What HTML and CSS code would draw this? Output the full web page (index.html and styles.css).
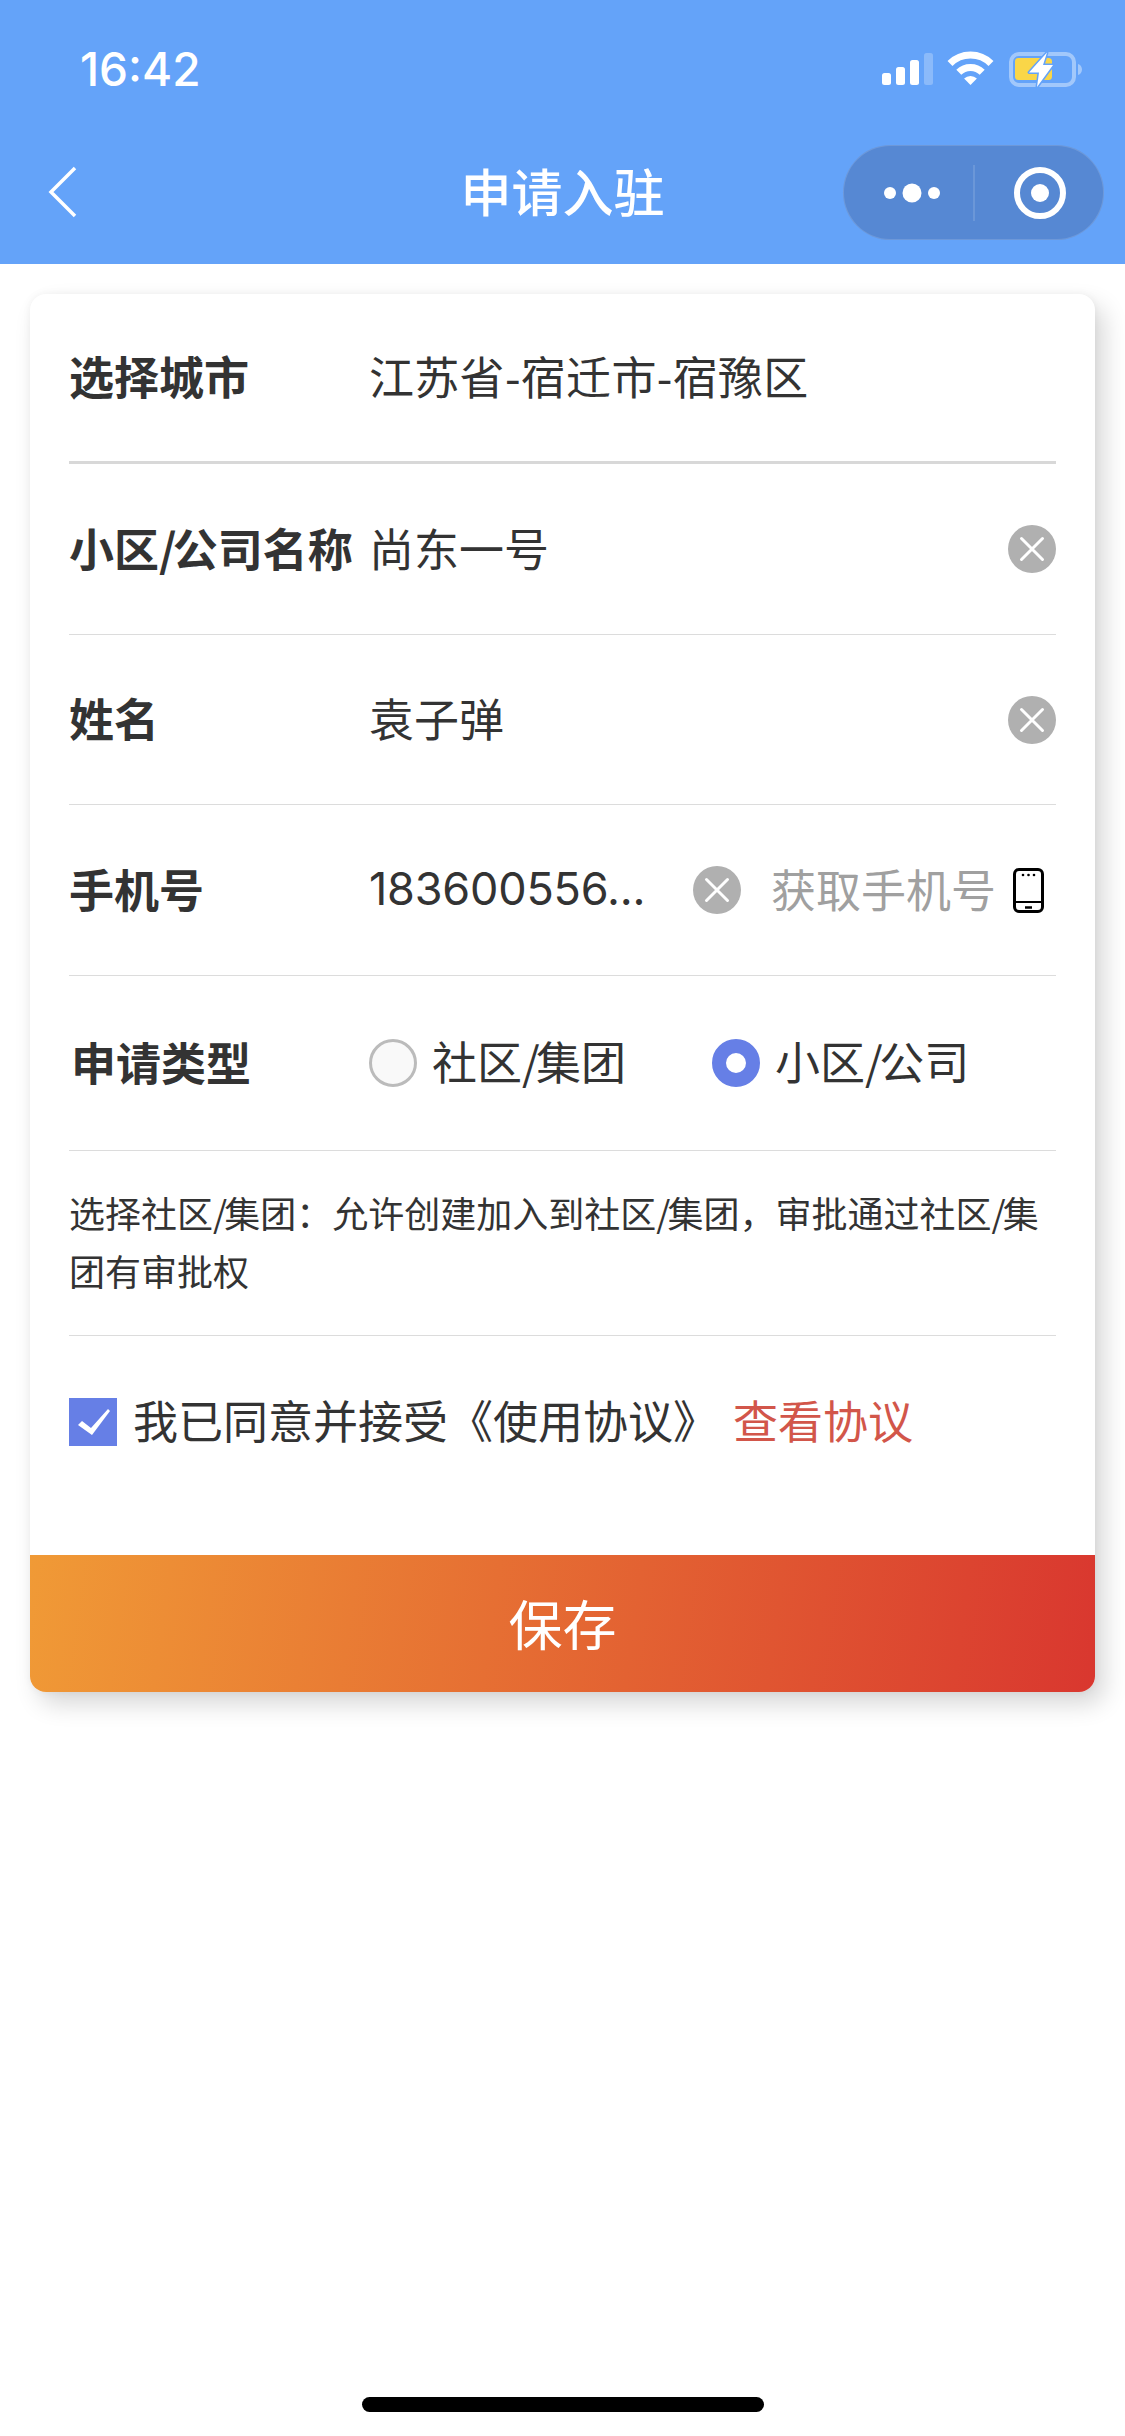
FILE: index.html
```html
<!DOCTYPE html>
<html lang="zh-CN">
<head>
<meta charset="utf-8">
<title>申请入驻</title>
<link rel="stylesheet" href="styles.css">
</head>
<body>
<div class="page">
  <header class="topbar">
    <div class="statusbar">
      <span class="time">16:42</span>
      <svg class="status-icons" viewBox="0 0 205 40" width="205" height="40">
        <g fill="#fff">
          <rect x="2" y="23" width="9" height="12" rx="2.5"/>
          <rect x="16" y="17" width="9" height="18" rx="2.5"/>
          <rect x="30" y="10" width="9" height="25" rx="2.5"/>
          <rect x="44" y="3" width="9" height="32" rx="2.5" opacity=".25"/>
        </g>
        <g fill="none" stroke="#fff" stroke-width="7">
          <path d="M70 13.500a29 29 0 0 1 41 0"/>
          <path d="M78.800 22.300a16.500 16.500 0 0 1 23.400 0"/>
        </g>
        <path d="M84.100 28.600a9 9 0 0 1 12.800 0L90.500 35z" fill="#fff"/>
        <rect x="131" y="4" width="63" height="31" rx="8" fill="none" stroke="#fff" stroke-opacity=".4" stroke-width="4"/>
        <path d="M198 14c2.500.8 4 3 4 5.500s-1.500 4.700-4 5.500z" fill="#fff" fill-opacity=".4"/>
        <rect x="135" y="8" width="37" height="22" rx="3.500" fill="#fad648"/>
        <path d="M167 2.500l-18 20h10l-2 14.500 16-22h-10z" fill="#fff" stroke="#64a3f9" stroke-width="3" stroke-linejoin="round" paint-order="stroke"/>
      </svg>
    </div>
    <nav class="navbar">
      <svg class="back" viewBox="0 0 30 52" width="30" height="52">
        <path d="M27 2L3 26l24 24" fill="none" stroke="#fff" stroke-width="3.500"/>
      </svg>
      <h1 class="title">申请入驻</h1>
      <div class="capsule">
        <svg class="capsule-icon" viewBox="0 0 261 95" width="261" height="95">
          <circle cx="47" cy="48" r="6" fill="#fff"/>
          <circle cx="69" cy="48" r="9.500" fill="#fff"/>
          <circle cx="91" cy="48" r="6" fill="#fff"/>
          <path d="M131 20v56" stroke="#fff" stroke-opacity=".25" stroke-width="1"/>
          <circle cx="197" cy="48" r="23" fill="none" stroke="#fff" stroke-width="6"/>
          <circle cx="197" cy="48" r="9" fill="#fff"/>
        </svg>
      </div>
    </nav>
  </header>

  <main class="card">
    <div class="row row--first">
      <div class="label">选择城市</div>
      <div class="value value--city">江苏省-宿迁市-宿豫区</div>
    </div>
    <div class="row row--c">
      <div class="label">小区<span class="sl">/</span>公司名称</div>
      <div class="value">尚东一号</div>
      <svg class="clear" viewBox="0 0 48 48" width="48" height="48"><circle cx="24" cy="24" r="24" fill="#b0b0b0"/><path d="M13.500 13.500l21 21m0-21l-21 21" stroke="#fff" stroke-width="3" stroke-linecap="round"/></svg>
    </div>
    <div class="row row--b">
      <div class="label">姓名</div>
      <div class="value">袁子弹</div>
      <svg class="clear" viewBox="0 0 48 48" width="48" height="48"><circle cx="24" cy="24" r="24" fill="#b0b0b0"/><path d="M13.500 13.500l21 21m0-21l-21 21" stroke="#fff" stroke-width="3" stroke-linecap="round"/></svg>
    </div>
    <div class="row row--c">
      <div class="label">手机号</div>
      <div class="value value--num">183600556...</div>
      <svg class="clear" viewBox="0 0 48 48" width="48" height="48"><circle cx="24" cy="24" r="24" fill="#b0b0b0"/><path d="M13.500 13.500l21 21m0-21l-21 21" stroke="#fff" stroke-width="3" stroke-linecap="round"/></svg>
      <span class="fetch">获取手机号</span>
      <svg class="phone" viewBox="0 0 31 45" width="31" height="45">
        <rect x="1.500" y="1.500" width="28" height="42" rx="4.500" fill="none" stroke="#000" stroke-width="3"/>
        <path d="M2 34h27" stroke="#000" stroke-width="2"/>
        <path d="M12 39.500h7" stroke="#000" stroke-width="2.500"/>
        <circle cx="10" cy="7" r="1.300"/><circle cx="15.500" cy="7" r="1.300"/><circle cx="21" cy="7" r="1.300"/>
      </svg>
    </div>
    <div class="row row--type">
      <div class="label label--type">申请类型</div>
      <div class="radios">
        <label class="radio"><span class="dot"></span><span class="radio-text">社区<span class="sl">/</span>集团</span></label>
        <label class="radio"><span class="dot dot--on"></span><span class="radio-text">小区<span class="sl">/</span>公司</span></label>
      </div>
    </div>
    <div class="hint">选择社区<span class="sl">/</span>集团：允许创建加入到社区<span class="sl">/</span>集团，审批通过社区<span class="sl">/</span>集<br>团有审批权</div>
    <div class="agree">
      <svg class="check" viewBox="0 0 48 48" width="48" height="48">
        <rect width="48" height="48" fill="#667fe6"/>
        <path d="M9 27l4-4 9 7 17-19 2 2-18 24z" fill="#fff"/>
      </svg>
      <span class="agree-text">我已同意并接受《使用协议》</span>
      <span class="agree-link">查看协议</span>
    </div>
    <button class="save" type="button">保存</button>
  </main>

  <div class="home-indicator"></div>
</div>
</body>
</html>
```

FILE: styles.css
```css
* { box-sizing: border-box; }
html, body { margin: 0; padding: 0; background: #fff; }
body { font-family: "Noto Sans CJK SC", "Liberation Sans", sans-serif; color: #333; }
.page { position: relative; width: 1125px; height: 2436px; overflow: hidden; }

.topbar { height: 264px; background: #64a3f9; color: #fff; }
.statusbar { height: 132px; padding: 50px 40px 0 80px; display: flex; justify-content: space-between; align-items: flex-start; }
.time { font-family: Inter, "Liberation Sans", sans-serif; font-size: 46px; font-weight: 500; line-height: 38px; }
.status-icons { display: block; }

.navbar { height: 120px; padding: 0 21px 0 48px; display: grid; grid-template-columns: 1fr auto 1fr; align-items: center; }
.back { display: block; }
.title { margin: 0 0 5px -27px; font-size: 51px; font-weight: 500; line-height: 60px; color: #fff; }
.capsule { justify-self: end; width: 261px; height: 95px; border-radius: 48px; background: #5688d3; box-shadow: inset 0 0 0 1px rgba(255,255,255,.14); }
.capsule-icon { display: block; }

.card { margin: 30px 30px 0; height: 1398px; background: #fff; border-radius: 16px; box-shadow: 9px 12px 24px rgba(0,0,0,.16), 0 0 8px rgba(0,0,0,.05); display: flex; flex-direction: column; }

.row { margin: 0 39px; display: flex; align-items: center; border-bottom: 1px solid #dcdcdc; flex: none; }
.row--first { height: 170px; border-bottom: 3px solid #d8d8d8; }
.row--b { height: 170px; }
.row--c { height: 171px; }
.row--type { height: 175px; }

.sl { letter-spacing: -.08em; }
.label { flex: none; width: 300px; padding-bottom: 3px; font-size: 45px; font-weight: 700; line-height: 60px; color: #333; }
.label--type { padding-left: 2px; }
.value { flex: 1; padding-bottom: 3px; font-size: 45px; line-height: 60px; color: #333; min-width: 0; }
.value--city { letter-spacing: .3px; }
.value--num { font-family: Inter, "Liberation Sans", sans-serif; letter-spacing: -.2px; }
.clear { flex: none; display: block; }
.fetch { flex: none; margin-left: 30px; padding-bottom: 3px; font-size: 45px; line-height: 60px; color: #a0a0a0; }
.phone { flex: none; display: block; margin: 0 12px 0 17px; }

.radios { display: flex; gap: 86px; }
.radio { display: flex; align-items: center; gap: 15px; font-size: 45px; line-height: 60px; color: #333; }
.radio-text { padding-bottom: 4px; }
.dot { width: 48px; height: 48px; border-radius: 50%; background: #f9f9f9; border: 3px solid #bbb; }
.dot--on { background: #fff; border: 14.500px solid #667fe6; }

.hint { flex: none; height: 185px; margin: 0 39px; padding-top: 32px; font-size: 36px; line-height: 58px; color: #333; border-bottom: 1px solid #dcdcdc; }

.agree { flex: none; height: 172px; margin: 0 39px 47px; display: flex; align-items: center; font-size: 45px; line-height: 60px; }
.check { flex: none; display: block; margin-right: 16px; }
.agree-text { padding-bottom: 4px; color: #333; }
.agree-link { margin-left: 15px; padding-bottom: 4px; color: #d2564a; }

.save { flex: none; height: 137px; width: 100%; padding: 0 0 2px; border: 0; border-radius: 0 0 16px 16px; background: linear-gradient(98deg, #f09a36 0%, #d9372f 100%); color: #fff; font-family: inherit; font-size: 54px; font-weight: 400; line-height: 70px; }

.home-indicator { position: absolute; left: 362px; top: 2397px; width: 402px; height: 15px; border-radius: 8px; background: #000; }
```
